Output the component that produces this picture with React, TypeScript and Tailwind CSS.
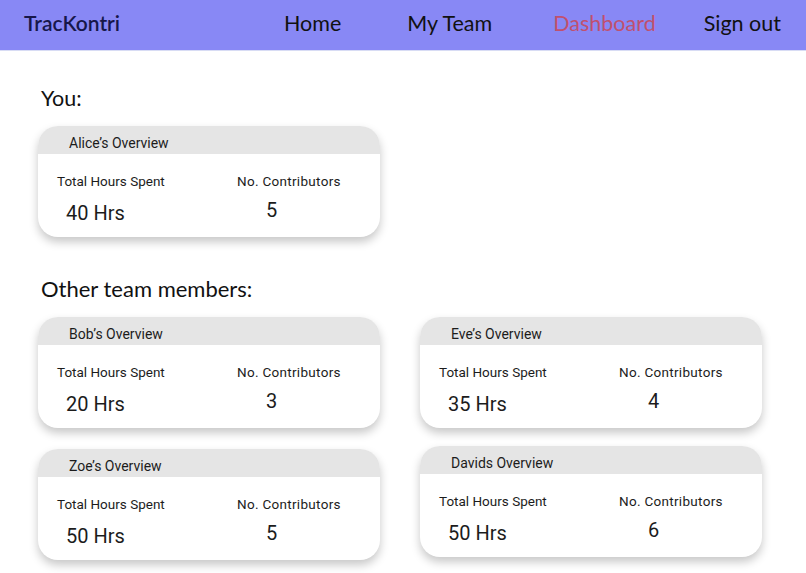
import React from "react"

type Member = { name: string; hours: number; contributors: number }

const you: Member = { name: "Alice’s Overview", hours: 40, contributors: 5 }

const team: Member[] = [
  { name: "Bob’s Overview", hours: 20, contributors: 3 },
  { name: "Eve’s Overview", hours: 35, contributors: 4 },
  { name: "Zoe’s Overview", hours: 50, contributors: 5 },
  { name: "Davids Overview", hours: 50, contributors: 6 },
]

function OverviewCard({ member, className = "" }: { member: Member; className?: string }) {
  return (
    <div
      className={`w-[342px] h-[111px] rounded-[20px] bg-white overflow-hidden shadow-[0_5px_10px_rgba(0,0,0,0.22)] font-['Roboto',sans-serif] text-[#1c1c1c] ${className}`}
    >
      <div className="h-[28px] bg-[#e5e5e5] pl-[31px] flex items-center text-[14px] pt-[6px]">
        {member.name}
      </div>
      <div className="flex pt-[18px]">
        <div className="w-[199px] pl-[19px]">
          <div className="text-[13.5px] leading-[18px]">Total Hours Spent</div>
          <div className="pl-[9px] mt-[11px] text-[20px] leading-[24px]">{member.hours} Hrs</div>
        </div>
        <div>
          <div className="text-[13.5px] leading-[18px] tracking-[0.3px]">No. Contributors</div>
          <div className="pl-[29px] mt-[8px] text-[20px] leading-[24px]">{member.contributors}</div>
        </div>
      </div>
    </div>
  )
}

export default function App() {
  return (
    <div className="min-h-screen bg-white font-['Lato',sans-serif]">
      {/* Nav */}
      <nav className="h-[51px] bg-[#8888f5] border-b border-[#d8dcf4] flex items-center pl-[24px] pb-[4px]">
        <div className="w-[260px] text-[21px] font-semibold text-[#17174a]">TracKontri</div>
        <div className="flex items-center text-[21.5px] text-[#111]">
          <span>Home</span>
          <span className="ml-[66px]">My Team</span>
          <span className="ml-[61px] text-[#c0506e]">Dashboard</span>
          <span className="ml-[48px]">Sign out</span>
        </div>
      </nav>

      <main className="pl-[38px]">
        <h2 className="pl-[3px] pt-[34px] text-[21.5px] text-[#111] leading-[26px]">You:</h2>
        <div className="mt-[15px]">
          <OverviewCard member={you} />
        </div>

        <h2 className="pl-[3px] mt-[39px] text-[22px] text-[#111] leading-[26px]">Other team members:</h2>
        <div className="mt-[15px] grid grid-cols-[342px_342px] gap-x-[40px] gap-y-[21px] items-start">
          {team.map((m, i) => (
            <OverviewCard key={i} member={m} className={i === 3 ? "-mt-[3px]" : ""} />
          ))}
        </div>
      </main>
    </div>
  )
}
